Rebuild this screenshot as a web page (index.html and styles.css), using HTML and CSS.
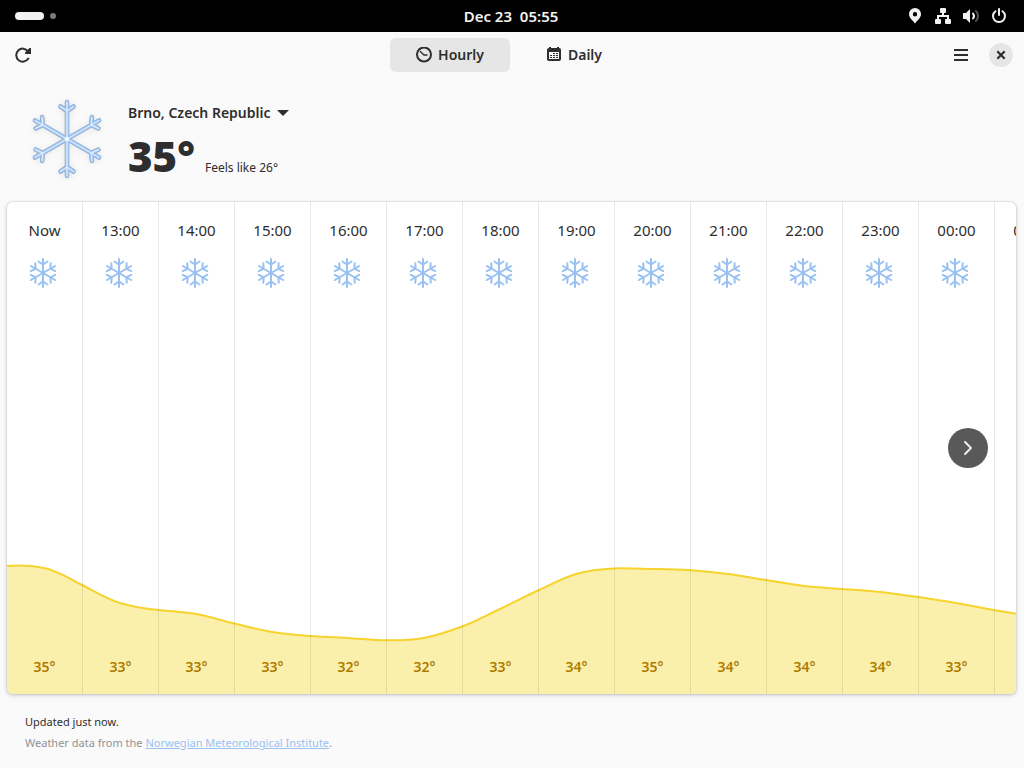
FILE: index.html
```html
<!DOCTYPE html>
<html lang="en">
<head>
<meta charset="utf-8">
<meta name="viewport" content="width=device-width, initial-scale=1">
<title>Weather</title>
<link rel="stylesheet" href="styles.css">
</head>
<body>
<svg class="defs" aria-hidden="true">
  <symbol id="flake" viewBox="0 0 32 32">
    <g fill="none" stroke="#99c1f1" stroke-width="2" stroke-linecap="round">
      <g id="axis"><path d="M16 2V30M11.500 4.500l4.500 3 4.500-3M11.500 27.500l4.500-3 4.500 3"/></g>
      <use href="#axis" transform="rotate(60 16 16)"/>
      <use href="#axis" transform="rotate(120 16 16)"/>
    </g>
  </symbol>
  <g id="arms"><path id="arm" d="M40 40V3M33.500 7.500L40 12L46.500 7.500"/><use href="#arm" transform="rotate(60 40 40)"/><use href="#arm" transform="rotate(120 40 40)"/><use href="#arm" transform="rotate(180 40 40)"/><use href="#arm" transform="rotate(240 40 40)"/><use href="#arm" transform="rotate(300 40 40)"/></g>
</svg>

<header class="panel">
  <button class="workspaces" aria-label="Activities"><span class="pill"></span><span class="dot"></span></button>
  <time class="clock" datetime="12-23T05:55">Dec 23&nbsp; 05:55</time>
  <div class="status">
    <svg width="16" height="16" viewBox="0 0 16 16" fill="#f2f2f2"><path fill-rule="evenodd" d="M8 0a6 6 0 0 0-6 6c0 4 4 6.500 6 9.500C10 12.500 14 10 14 6a6 6 0 0 0-6-6zm0 4a2.200 2.200 0 1 1 0 4.400A2.200 2.200 0 0 1 8 4z"/></svg>
    <svg width="16" height="16" viewBox="0 0 16 16" fill="#f2f2f2"><rect x="5" y="0" width="6" height="5" rx="1"/><path d="M7 4h2v3h5v4h-2V9H4v2H2V7h5z"/><rect x="0" y="11" width="6" height="5" rx="1"/><rect x="10" y="11" width="6" height="5" rx="1"/></svg>
    <svg width="16" height="16" viewBox="0 0 16 16" fill="none" stroke-width="2" stroke-linecap="round"><path d="M0 5h3l4-4v14l-4-4H0z" fill="#f2f2f2"/><path d="M10 5.500q2 2.500 0 5" stroke="#f2f2f2"/><path d="M13 3q4 5 0 10" stroke="#555"/></svg>
    <svg width="16" height="16" viewBox="0 0 16 16" fill="none" stroke="#f2f2f2" stroke-width="2" stroke-linecap="round"><path d="M4.500 3.200a6 6 0 1 0 7 0M8 1v6"/></svg>
  </div>
</header>

<main class="window">
  <div class="toolbar">
    <button class="icon-button" aria-label="Refresh"><svg width="16" height="16" viewBox="0 0 16 16"><path d="M13.300 11.500A6.500 6.500 0 1 1 13 4.300" fill="none" stroke="#2e2e2e" stroke-width="2" stroke-linecap="round"/><path d="M16 1v6h-6V5.500L14.500 1z" fill="#2e2e2e"/></svg></button>
    <nav class="views">
      <button class="view active" aria-pressed="true"><svg width="16" height="16" viewBox="0 0 16 16" fill="none" stroke="#2e2e2e"><circle cx="8" cy="7.500" r="7" stroke-width="2"/><path d="M4.300 4.500L8 8h3" stroke-width="1.300" stroke-linecap="round"/></svg>Hourly</button>
      <button class="view" aria-pressed="false"><svg width="16" height="16" viewBox="0 0 16 16"><path fill="#2e2e2e" fill-rule="evenodd" d="M3 0h2v1h6V0h2v1c1.200 0 2 .8 2 2v9c0 1.200-.8 2-2 2H3c-1.200 0-2-.8-2-2V3c0-1.200.8-2 2-2zm0 5v7h10V5z"/><path stroke="#2e2e2e" d="M7 6.500h2M10 6.500h2M4 8.500h2M7 8.500h2M10 8.500h2M4 10.500h2M7 10.500h2M10 10.500h2"/></svg>Daily</button>
    </nav>
    <div class="window-actions">
      <button class="icon-button" aria-label="Menu"><svg width="16" height="16" viewBox="0 0 16 16" stroke="#2e2e2e" stroke-width="2"><path d="M1 3h14M1 8h14M1 13h14"/></svg></button>
      <button class="close" aria-label="Close"><svg width="16" height="16" viewBox="0 0 16 16" stroke="#2e2e2e" stroke-width="2.200"><path d="M4.300 4.300l7.400 7.400M11.700 4.300l-7.400 7.400"/></svg></button>
    </div>
  </div>

  <section class="current">
    <svg class="condition" width="80" height="80" viewBox="0 0 80 80" fill="none" stroke-linecap="round" stroke-linejoin="round" role="img" aria-label="Snow">
      <use href="#arms" stroke="#93a3b8" stroke-width="4.600"/>
      <use href="#arms" stroke="#99c1f1" stroke-width="3.800"/>
      <use href="#arms" stroke="#deebfc" stroke-width="1.400"/>
      <circle cx="40" cy="40" r="2" fill="#fff"/>
    </svg>
    <div class="summary">
      <button class="place">Brno, Czech Republic<svg width="12" height="6" viewBox="0 0 12 6"><path d="M0 0h12L6 6z" fill="#2e2e2e"/></svg></button>
      <div class="reading"><strong class="temperature">35°</strong><span class="small">Feels like 26°</span></div>
    </div>
  </section>

  <section class="forecast" aria-label="Hourly forecast">
    <div class="scroller">
      <svg class="chart" width="1064" height="140" viewBox="0 0 1064 140" aria-hidden="true">
        <path fill="#fbf0ab" d="M0 12C12 11 24 11.500 37 14S62 24.200 75 31S100 45.200 113 49S138 54.700 151 56S176 57.800 189 60S214 66.500 227 69.500S252 75.900 265 78S290 81 303 82S328 83.300 341 84S366 86.300 379 86.300S404 86.500 417 84S442 77.300 455 72.500S480 61 493 55S518 42.300 531 36.500S556 23.700 569 20S594 15 607 14.500S632 14.700 645 15S670 15.500 683 16.300S708 18.400 721 20S746 24 759 26S784 30.500 797 32S822 34 835 35S860 36.700 873 38S898 41.200 911 43S936 46.900 949 49S974 53.800 987 56S1012 60.800 1025 62L1064 65V140H0z"/>
        <path fill="none" stroke="#f6d32d" stroke-width="2" d="M0 12C12 11 24 11.500 37 14S62 24.200 75 31S100 45.200 113 49S138 54.700 151 56S176 57.800 189 60S214 66.500 227 69.500S252 75.900 265 78S290 81 303 82S328 83.300 341 84S366 86.300 379 86.300S404 86.500 417 84S442 77.300 455 72.500S480 61 493 55S518 42.300 531 36.500S556 23.700 569 20S594 15 607 14.500S632 14.700 645 15S670 15.500 683 16.300S708 18.400 721 20S746 24 759 26S784 30.500 797 32S822 34 835 35S860 36.700 873 38S898 41.200 911 43S936 46.900 949 49S974 53.800 987 56S1012 60.800 1025 62L1064 65"/>
      </svg>
      <ol class="hours">
        <li class="hour"><span>Now</span><svg class="flake"><use href="#flake"/></svg><b>35°</b></li>
        <li class="hour"><span>13:00</span><svg class="flake"><use href="#flake"/></svg><b>33°</b></li>
        <li class="hour"><span>14:00</span><svg class="flake"><use href="#flake"/></svg><b>33°</b></li>
        <li class="hour"><span>15:00</span><svg class="flake"><use href="#flake"/></svg><b>33°</b></li>
        <li class="hour"><span>16:00</span><svg class="flake"><use href="#flake"/></svg><b>32°</b></li>
        <li class="hour"><span>17:00</span><svg class="flake"><use href="#flake"/></svg><b>32°</b></li>
        <li class="hour"><span>18:00</span><svg class="flake"><use href="#flake"/></svg><b>33°</b></li>
        <li class="hour"><span>19:00</span><svg class="flake"><use href="#flake"/></svg><b>34°</b></li>
        <li class="hour"><span>20:00</span><svg class="flake"><use href="#flake"/></svg><b>35°</b></li>
        <li class="hour"><span>21:00</span><svg class="flake"><use href="#flake"/></svg><b>34°</b></li>
        <li class="hour"><span>22:00</span><svg class="flake"><use href="#flake"/></svg><b>34°</b></li>
        <li class="hour"><span>23:00</span><svg class="flake"><use href="#flake"/></svg><b>34°</b></li>
        <li class="hour"><span>00:00</span><svg class="flake"><use href="#flake"/></svg><b>33°</b></li>
        <li class="hour"><span>01:00</span><svg class="flake"><use href="#flake"/></svg></li>
      </ol>
    </div>
    <button class="next" aria-label="Later hours"><svg width="16" height="16" viewBox="0 0 16 16"><path d="M5 2l6 6-6 6" fill="none" stroke="#eee" stroke-width="2" stroke-linecap="round" stroke-linejoin="round"/></svg></button>
  </section>

  <footer class="credits">
    <p>Updated just now.</p>
    <p class="source">Weather data from the <a href="#met">Norwegian Meteorological Institute</a>.</p>
  </footer>
</main>
</body>
</html>
```
FILE: styles.css
```css
* { box-sizing: border-box; }

body {
  margin: 0;
  min-height: 100vh;
  display: flex;
  flex-direction: column;
  background: #fafafa;
  color: #2e2e2e;
  font: 14px/20px "Noto Sans", "Open Sans", sans-serif;
}

svg { display: block; flex: none; }
.defs { position: absolute; width: 0; height: 0; }

button {
  border: 0;
  padding: 0;
  background: none;
  color: inherit;
  font: inherit;
  font-weight: 600;
}

.panel {
  display: grid;
  grid-template-columns: 1fr auto 1fr;
  align-items: center;
  height: 32px;
  padding: 0 17px 0 15px;
  background: #000;
  color: #f2f2f2;
}
.workspaces { display: flex; align-items: center; gap: 6px; }
.pill { width: 29px; height: 8px; border-radius: 4px; background: #f2f2f2; }
.dot { width: 6px; height: 6px; border-radius: 50%; background: #7a7a7a; }
.clock { font-size: 15px; font-weight: 600; }
.status { display: flex; justify-content: flex-end; gap: 12px; }

.window { flex: 1; display: flex; flex-direction: column; }

.toolbar {
  display: grid;
  grid-template-columns: 1fr auto 1fr;
  align-items: center;
  height: 46px;
  padding: 0 11px;
}
.icon-button {
  display: flex;
  align-items: center;
  justify-content: center;
  width: 24px;
  height: 34px;
}
.views { display: flex; gap: 4px; }
.view {
  display: flex;
  align-items: center;
  justify-content: center;
  gap: 6px;
  width: 120px;
  height: 34px;
  border-radius: 6px;
}
.view.active { background: #e6e6e6; }
.window-actions { display: flex; align-items: center; justify-content: flex-end; gap: 16px; }
.close {
  display: flex;
  align-items: center;
  justify-content: center;
  width: 24px;
  height: 24px;
  border-radius: 50%;
  background: #e6e6e6;
}

.current { display: flex; gap: 21px; padding: 21px 27px 23px; }
.condition { filter: drop-shadow(0 1px 3px rgba(0, 0, 0, .08)); }
.summary { display: flex; flex-direction: column; gap: 9px; padding-top: 4px; }
.place { display: flex; align-items: center; gap: 6px; line-height: 20px; }
.reading { display: flex; align-items: baseline; gap: 10px; height: 44px; }
.temperature { font: 800 42px/48px "Open Sans", "Noto Sans", sans-serif; }
.small { font-size: 12px; }

.forecast {
  position: relative;
  flex: 1;
  display: flex;
  margin: 0 8px 0 7px;
  border-radius: 6px;
  background: #fff;
  box-shadow: 0 0 0 1px rgba(0, 0, 0, .05), 0 1px 3px 1px rgba(0, 0, 0, .1), 0 2px 8px rgba(0, 0, 0, .05);
}
.scroller {
  position: relative;
  flex: 1;
  display: flex;
  min-width: 0;
  overflow: hidden;
  border-radius: 6px;
}
.chart { position: absolute; left: 0; bottom: 0; }
.hours {
  position: relative;
  display: flex;
  margin: 0;
  padding: 0;
  list-style: none;
}
.hour {
  display: flex;
  flex-direction: column;
  align-items: center;
  width: 76px;
  padding: 18px 0 17px;
  border-right: 1px solid rgba(0, 0, 0, .09);
  font-size: 15px;
}
.flake { width: 32px; height: 32px; margin: 17px 3px 0 0; }
.hour b { margin-top: auto; color: #ae7b03; font-size: 14px; font-weight: 600; }

.next {
  position: absolute;
  right: 28px;
  top: calc(50% - 20px);
  display: flex;
  align-items: center;
  justify-content: center;
  width: 40px;
  height: 40px;
  border-radius: 50%;
  background: #595959;
}

.credits { padding: 17px 25px 15px; font-size: 11px; }
.credits p { margin: 0; line-height: 21px; }
.source { color: #929292; }
.source a { color: #99c1f1; }
```
